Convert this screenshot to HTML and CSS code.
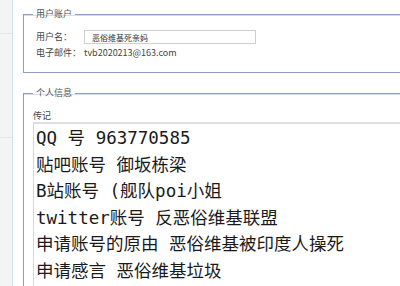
FILE: index.html
```html
<!DOCTYPE html>
<html lang="zh-CN">
<head>
    <meta charset="UTF-8">
    <title>用户资料</title>
    <link rel="stylesheet" href="styles.css">
</head>
<body>
    <div class="sidebar">
        <div class="side-item"></div>
        <div class="side-item"></div>
    </div>
    <div class="main">
        <fieldset class="box">
            <legend>用户账户</legend>
            <div class="form-rows">
                <label for="username">用户名：</label>
                <input type="text" id="username" value="恶俗维基死亲妈">
                <span class="label">电子邮件：</span>
                <span class="value">tvb2020213@163.com</span>
            </div>
        </fieldset>

        <fieldset class="box last">
            <legend>个人信息</legend>
            <label for="bio" class="bio-label">传记</label>
            <textarea id="bio" class="bio" readonly>QQ 号 963770585
贴吧账号 御坂栋梁
B站账号 (舰队poi小姐
twitter账号 反恶俗维基联盟
申请账号的原由 恶俗维基被印度人操死
申请感言 恶俗维基垃圾</textarea>
        </fieldset>
    </div>
</body>
</html>
```

FILE: styles.css
```css
/* Base */
* {
    box-sizing: border-box;
}

html, body {
    height: 100%;
}

body {
    margin: 0;
    display: flex;
    overflow: hidden;
    background: #fff;
    font-family: 'Noto Sans CJK SC', 'Noto Sans', sans-serif;
    font-size: 9px;
    color: #444;
}

/* Left strip */
.sidebar {
    width: 13px;
    flex: none;
    background: #f4f4f4;
    border-right: 1px solid #cfe3ef;
}

.side-item {
    height: 34px;
    border-bottom: 1px solid #e6e6e6;
}

.side-item + .side-item {
    height: 104px;
}

/* Content */
.main {
    flex: 1;
    min-width: 0;
    display: flex;
    flex-direction: column;
    padding: 8px 0 0 10px;
}

.box {
    min-width: 0;
    margin: 0 0 14px 0;
    padding: 0 0 0 9px;
    border: 1px solid #8c9fc6;
    border-right: none;
    box-shadow: inset 0 1px 0 #d3dbec;
}

.box.last {
    flex: 1;
    min-height: 0;
    display: flex;
    flex-direction: column;
    margin-bottom: 0;
    border-bottom: none;
}

.box legend {
    padding: 0 3px;
    line-height: 12px;
    color: #555;
}

/* Account rows */
.form-rows {
    display: grid;
    grid-template-columns: 48px 172px;
    row-gap: 3px;
    align-items: center;
    padding: 10px 0 13px 3px;
}

.form-rows label,
.form-rows .label,
.form-rows .value {
    line-height: 12px;
}

.form-rows input {
    height: 14px;
    padding: 0 7px;
    border: 1px solid #cfcfcf;
    font-family: inherit;
    font-size: 8px;
    color: #333;
}

/* Biography */
.bio-label {
    display: block;
    margin-top: 11px;
    line-height: 12px;
}

.bio {
    display: block;
    flex: 1;
    min-height: 0;
    width: 100%;
    margin: 0;
    padding: 1px 2px;
    border: 1px solid #d6d6d6;
    border-top: 2px solid #dedede;
    border-right: none;
    border-bottom: none;
    resize: none;
    overflow: hidden;
    font-family: 'DejaVu Sans Mono', 'Noto Sans CJK SC', monospace;
    font-size: 17.5px;
    line-height: 26.5px;
    color: #1a1a1a;
}
```
